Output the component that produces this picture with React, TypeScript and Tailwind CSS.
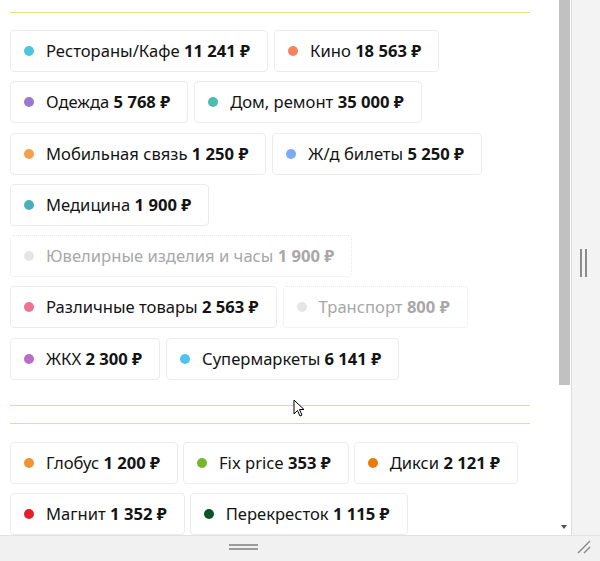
import React from "react";

type Item = { name: string; amount: string; color: string; disabled?: boolean };

const section1: Item[] = [
  { name: "Рестораны/Кафе", amount: "11 241 ₽", color: "#4ec5e0" },
  { name: "Кино", amount: "18 563 ₽", color: "#f5835f" },
  { name: "Одежда", amount: "5 768 ₽", color: "#9a78d0" },
  { name: "Дом, ремонт", amount: "35 000 ₽", color: "#4dbbb0" },
  { name: "Мобильная связь", amount: "1 250 ₽", color: "#f5a04e" },
  { name: "Ж/д билеты", amount: "5 250 ₽", color: "#7daaf5" },
  { name: "Медицина", amount: "1 900 ₽", color: "#4aafbb" },
  { name: "Ювелирные изделия и часы", amount: "1 900 ₽", color: "#e6e6e6", disabled: true },
  { name: "Различные товары", amount: "2 563 ₽", color: "#f07296" },
  { name: "Транспорт", amount: "800 ₽", color: "#e6e6e6", disabled: true },
  { name: "ЖКХ", amount: "2 300 ₽", color: "#b86ec8" },
  { name: "Супермаркеты", amount: "6 141 ₽", color: "#4fc3ef" },
];

const section2: Item[] = [
  { name: "Глобус", amount: "1 200 ₽", color: "#ef9430" },
  { name: "Fix price", amount: "353 ₽", color: "#78b42c" },
  { name: "Дикси", amount: "2 121 ₽", color: "#e77c0a" },
  { name: "Магнит", amount: "1 352 ₽", color: "#e0212a" },
  { name: "Перекресток", amount: "1 115 ₽", color: "#0c5328" },
];

function Chip({ item }: { item: Item }) {
  return (
    <div
      className={
        "flex items-center h-[42px] pl-[13px] pr-[17px] rounded-[4px] " +
        (item.disabled
          ? "border border-dotted border-[#e8e8e8] text-[#a8a8a8]"
          : "border border-solid border-[#ececec] text-[#141414]")
      }
    >
      <span
        className="w-[10px] h-[10px] rounded-full mr-[12px] shrink-0"
        style={{ backgroundColor: item.color }}
      />
      <span className="text-[16.6px] leading-[24px] whitespace-nowrap">
        {item.name} <span className="font-bold">{item.amount}</span>
      </span>
    </div>
  );
}

function Rule() {
  return <div className="h-[1px] bg-[#e9dc8a]" />;
}

export default function App() {
  return (
    <div
      className="w-[600px] h-[561px] flex flex-col bg-[#f1f1f1] overflow-hidden relative"
      style={{ fontFamily: '"Noto Sans", "Open Sans", sans-serif' }}
    >
      <div className="flex h-[535px]">
        {/* content */}
        <div className="w-[557px] h-full bg-white overflow-hidden pl-[10px] pr-[27px] pt-[12px]">
          <Rule />
          <div className="pt-[17px] pb-[25px]">
            <div className="flex flex-wrap gap-x-[6px] gap-y-[9.3px]">
              {section1.map((it) => (
                <Chip key={it.name} item={it} />
              ))}
            </div>
          </div>
          <Rule />
          <div className="h-[17px]" />
          <Rule />
          <div className="pt-[18px]">
            <div className="flex flex-wrap gap-x-[5px] gap-y-[9px]">
              {section2.map((it) => (
                <Chip key={it.name} item={it} />
              ))}
            </div>
          </div>
        </div>
        {/* scrollbar */}
        <div className="w-[15px] h-full bg-white border-r border-[#dcdcdc] flex flex-col items-center">
          <div className="w-[11px] h-[385px] bg-[#c1c1c1] mt-0" />
          <div className="flex-1" />
          <div className="mb-[6px] w-0 h-0 border-l-[3.5px] border-r-[3.5px] border-t-[4px] border-l-transparent border-r-transparent border-t-[#505050]" />
        </div>
        {/* right gutter */}
        <div className="flex-1 h-full bg-[#f3f3f3] flex items-center justify-center">
          <div className="flex gap-[3px] -mt-[10px] ml-[-6px]">
            <div className="w-[2px] h-[28px] bg-[#8c8c8c]" />
            <div className="w-[2px] h-[28px] bg-[#8c8c8c]" />
          </div>
        </div>
      </div>
      {/* bottom bar */}
      <div className="flex-1 bg-[#f1f1f1] border-t border-[#e2e2e2] relative flex justify-center">
        <div className="flex flex-col gap-[2px] mt-[8px] ml-[-114px]">
          <div className="w-[29px] h-[2px] bg-[#9a9a9a]" />
          <div className="w-[29px] h-[2px] bg-[#9a9a9a]" />
        </div>
        <svg className="absolute right-[8px] bottom-[6px]" width="16" height="16" viewBox="0 0 16 16">
          <line x1="2" y1="14" x2="14" y2="2" stroke="#8a8a8a" strokeWidth="1.5" />
          <line x1="8" y1="14" x2="14" y2="8" stroke="#8a8a8a" strokeWidth="1.5" />
        </svg>
      </div>
      {/* mouse cursor */}
      <svg className="absolute left-[293px] top-[399px]" width="12" height="19" viewBox="0 0 12 19">
        <path d="M1 1 L1 15 L4.5 11.5 L7 17 L9 16 L6.5 10.5 L11 10.5 Z" fill="#ffffff" stroke="#000000" strokeWidth="1" strokeLinejoin="round" />
      </svg>
    </div>
  );
}
